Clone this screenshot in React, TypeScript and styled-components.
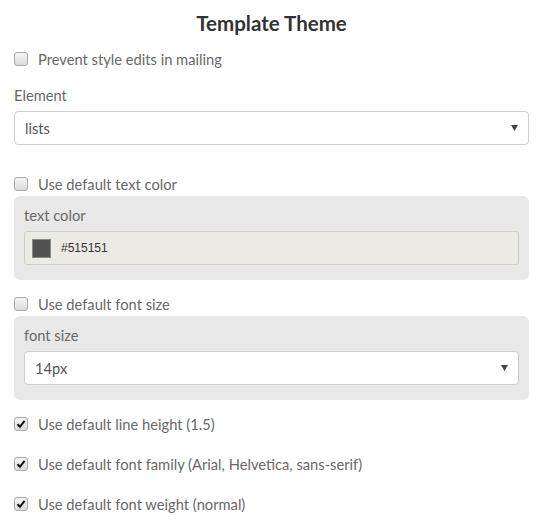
import styled, { createGlobalStyle } from "styled-components";

const GlobalStyle = createGlobalStyle`
  body {
    margin: 0;
    background: #fff;
    font-family: Lato, "Open Sans", sans-serif;
  }
`;

const Form = styled.div`
  width: 545px;
  padding: 0 16px 0 14px;
  box-sizing: border-box;
`;

const Title = styled.h2`
  margin: 0;
  height: 49px;
  line-height: 46px;
  text-align: center;
  font-size: 20.5px;
  font-weight: 700;
  color: #333;
`;

const CheckRow = styled.label<{ $mt: number }>`
  display: flex;
  align-items: center;
  gap: 10px;
  height: 20px;
  margin-top: ${(p) => p.$mt}px;
  font-size: 14.7px;
  color: #686868;
`;

const Box = styled.span`
  display: inline-flex;
  align-items: center;
  justify-content: center;
  width: 12px;
  height: 12px;
  border: 1px solid #a9a9a9;
  border-radius: 3px;
  background: linear-gradient(#f6f6f6, #dadada);
  flex-shrink: 0;
`;

const Label = styled.div<{ $mt: number }>`
  height: 20px;
  line-height: 20px;
  margin-top: ${(p) => p.$mt}px;
  font-size: 14.7px;
  color: #686868;
`;

const Select = styled.div<{ $mt: number }>`
  display: flex;
  align-items: center;
  justify-content: space-between;
  height: 34px;
  margin-top: ${(p) => p.$mt}px;
  padding: 0 10px 0 10px;
  box-sizing: border-box;
  background: #fff;
  border: 1px solid #cfcfcf;
  border-radius: 4px;
  font-size: 14.7px;
  color: #555;
`;

const Panel = styled.div`
  display: flow-root;
  margin-top: 2px;
  padding: 9px 10px 15px;
  background: #e8e8e8;
  border-radius: 6px;
`;

const ColorInput = styled.div`
  display: flex;
  align-items: center;
  gap: 10px;
  height: 34px;
  margin-top: 6px;
  padding: 0 7px;
  box-sizing: border-box;
  background: #ebeae4;
  border: 1px solid #cdcdc8;
  border-radius: 3px;
  font-family: "Liberation Sans", Arial, sans-serif;
  font-size: 12px;
  color: #333;
`;

const Swatch = styled.span<{ $color: string }>`
  width: 17px;
  height: 17px;
  background: ${(p) => p.$color};
  border: 1px solid #888;
`;

function Check({ checked }: { checked?: boolean }) {
  return (
    <Box>
      {checked && (
        <svg width="10" height="10" viewBox="0 0 10 10">
          <path d="M1.5 5.2 L4 7.8 L8.6 1.8" fill="none" stroke="#111" strokeWidth="2" />
        </svg>
      )}
    </Box>
  );
}

function Arrow() {
  return (
    <svg width="7" height="6" viewBox="0 0 7 6">
      <path d="M0 0 H7 L3.5 6 Z" fill="#444" />
    </svg>
  );
}

export default function App() {
  return (
    <>
      <GlobalStyle />
      <Form>
        <Title>Template Theme</Title>
        <CheckRow $mt={0}>
          <Check />
          Prevent style edits in mailing
        </CheckRow>
        <Label $mt={16}>Element</Label>
        <Select $mt={6}>
          <span>lists</span>
          <Arrow />
        </Select>
        <CheckRow $mt={29}>
          <Check />
          Use default text color
        </CheckRow>
        <Panel>
          <Label $mt={0}>text color</Label>
          <ColorInput>
            <Swatch $color="#515151" />
            #515151
          </ColorInput>
        </Panel>
        <CheckRow $mt={14}>
          <Check />
          Use default font size
        </CheckRow>
        <Panel>
          <Label $mt={0}>font size</Label>
          <Select $mt={6}>
            <span>14px</span>
            <Arrow />
          </Select>
        </Panel>
        <CheckRow $mt={14}>
          <Check checked />
          Use default line height (1.5)
        </CheckRow>
        <CheckRow $mt={20}>
          <Check checked />
          Use default font family (Arial, Helvetica, sans-serif)
        </CheckRow>
        <CheckRow $mt={20}>
          <Check checked />
          Use default font weight (normal)
        </CheckRow>
      </Form>
    </>
  );
}
